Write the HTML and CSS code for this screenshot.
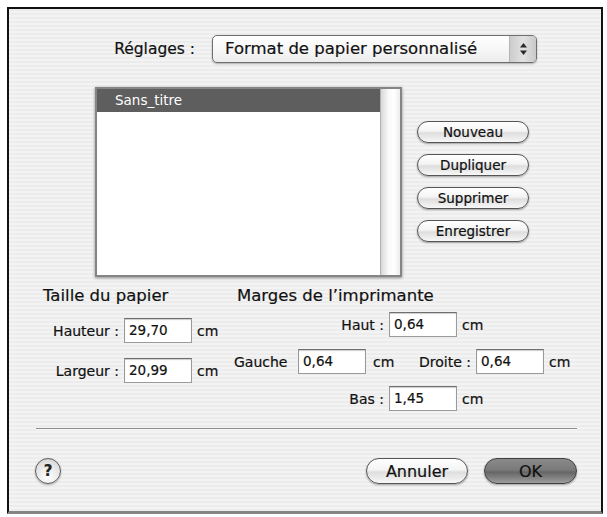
FILE: index.html
```html
<!DOCTYPE html>
<html lang="fr">

<head>
  <meta charset="utf-8">
  <title>Format de papier personnalisé</title>
  <link rel="stylesheet" href="styles.css">
</head>

<body>
  <div class="dialog">
    <div class="settings">
      <span class="settings-label">Réglages :</span>
      <div class="popup">
        <span class="popup-text">Format de papier personnalisé</span>
        <span class="popup-arrows">
          <svg width="9" height="14" viewBox="0 0 9 14">
            <path d="M4.5 1 L8 5.5 L1 5.5 Z" fill="#2a2a2a"/>
            <path d="M4.5 13 L8 8.5 L1 8.5 Z" fill="#2a2a2a"/>
          </svg>
        </span>
      </div>
    </div>

    <div class="middle">
      <div class="list">
        <div class="list-body">
          <div class="list-row selected">Sans_titre</div>
        </div>
        <div class="scrollbar"></div>
      </div>
      <div class="side-buttons">
        <button class="aqua">Nouveau</button>
        <button class="aqua">Dupliquer</button>
        <button class="aqua">Supprimer</button>
        <button class="aqua">Enregistrer</button>
      </div>
    </div>

    <div class="sizes">
      <div class="paper">
        <h2 class="group-title paper-title">Taille du papier</h2>
        <div class="field-row paper-first">
          <span class="lbl paper-lbl">Hauteur :</span>
          <span class="field">29,70</span>
          <span class="unit">cm</span>
        </div>
        <div class="field-row paper-second">
          <span class="lbl paper-lbl">Largeur :</span>
          <span class="field">20,99</span>
          <span class="unit">cm</span>
        </div>
      </div>

      <div class="margins">
        <h2 class="group-title">Marges de l’imprimante</h2>
        <div class="field-row margin-top">
          <span class="lbl wide-lbl">Haut :</span>
          <span class="field">0,64</span>
          <span class="unit">cm</span>
        </div>
        <div class="field-row margin-mid">
          <span class="lbl left-lbl">Gauche</span>
          <span class="field">0,64</span>
          <span class="unit unit-box">cm</span>
          <span class="lbl droite-lbl">Droite :</span>
          <span class="field">0,64</span>
          <span class="unit">cm</span>
        </div>
        <div class="field-row margin-mid">
          <span class="lbl wide-lbl">Bas :</span>
          <span class="field">1,45</span>
          <span class="unit">cm</span>
        </div>
      </div>
    </div>

    <hr class="separator">

    <div class="footer">
      <button class="help">?</button>
      <div class="spacer"></div>
      <button class="aqua big">Annuler</button>
      <button class="aqua big default">OK</button>
    </div>
  </div>
</body>

</html>
```

FILE: styles.css
```css
html {
  background-color: #ffffff;
}

body {
  margin: 0;
  font-family: "DejaVu Sans", "Liberation Sans", sans-serif;
  color: #111111;
  -webkit-text-stroke: 0.2px;
}

.dialog {
  box-sizing: border-box;
  margin: 7px 0 0 7px;
  width: 596px;
  height: 507px;
  border: 2px solid #111111;
  border-bottom: 3px solid #858585;
  background: repeating-linear-gradient(to bottom, #ececec 0 2px, #f3f3f3 2px 4px);
}

/* Réglages row */

.settings {
  display: flex;
  align-items: center;
  margin-top: 26px;
}

.settings-label {
  box-sizing: border-box;
  width: 203px;
  padding-right: 17px;
  text-align: right;
  font-size: 15.5px;
}

.popup {
  box-sizing: border-box;
  display: flex;
  width: 325px;
  height: 28px;
  border: 1px solid #6e6e6e;
  border-radius: 5px;
  background: linear-gradient(#ffffff, #f7f7f7 50%, #ececec);
  box-shadow: 0 1px 2px rgba(0, 0, 0, 0.3);
  overflow: hidden;
}

.popup-text {
  flex: 1;
  padding-left: 12px;
  font-size: 16.5px;
  line-height: 26px;
}

.popup-arrows {
  display: flex;
  align-items: center;
  justify-content: center;
  width: 26px;
  border-left: 1px solid #b5b5b5;
  background: linear-gradient(to right, #cccccc, #e2e2e2 50%, #c9c9c9);
}

/* list and side buttons */

.middle {
  display: flex;
  margin-top: 24px;
  padding-left: 86px;
}

.list {
  box-sizing: border-box;
  display: flex;
  width: 307px;
  height: 190px;
  border: 2px solid #858585;
  background: #ffffff;
  box-shadow: 0 1px 3px rgba(0, 0, 0, 0.4);
}

.list-body {
  flex: 1;
}

.list-row {
  height: 23px;
  line-height: 23px;
  padding-left: 18px;
  font-size: 13.5px;
}

.selected {
  background: #5e5e5e;
  color: #ffffff;
  -webkit-text-stroke: 0;
}

.scrollbar {
  width: 19px;
  border-left: 1px solid #b0b0b0;
  background: linear-gradient(to right, #d8d8d8, #fafafa 40%, #ffffff 70%, #ececec);
}

.side-buttons {
  display: flex;
  flex-direction: column;
  gap: 11px;
  margin-left: 15px;
  padding-top: 34px;
}

.aqua {
  box-sizing: border-box;
  width: 112px;
  height: 22px;
  padding: 0;
  border: 1px solid #555555;
  border-radius: 11px;
  background: linear-gradient(#ffffff, #f4f4f4 45%, #dedede 55%, #f7f7f7);
  box-shadow: 0 1px 2px rgba(0, 0, 0, 0.35);
  font-family: inherit;
  font-size: 13.5px;
  color: #111111;
  -webkit-text-stroke: 0.2px;
}

/* paper size and margins */

.sizes {
  display: flex;
  margin-top: 9px;
}

.group-title {
  margin: 0;
  font-size: 16.5px;
  font-weight: normal;
  line-height: 20px;
}

.paper {
  width: 224px;
}

.paper-title {
  padding-left: 34px;
}

.field-row {
  display: flex;
  align-items: center;
  height: 25px;
  font-size: 14px;
}

.lbl {
  box-sizing: border-box;
  text-align: right;
  padding-right: 5px;
}

.paper-lbl {
  width: 115px;
}

.paper-first {
  margin-top: 12px;
}

.paper-second {
  margin-top: 15px;
}

.field {
  box-sizing: border-box;
  width: 68px;
  height: 25px;
  padding-left: 4px;
  border: 1px solid #9a9a9a;
  border-top-color: #6f6f6f;
  background: #ffffff;
  box-shadow: inset 0 1px 1px rgba(0, 0, 0, 0.2);
  font-size: 13.5px;
  line-height: 23px;
}

.unit {
  padding-left: 5px;
}

.margins .group-title {
  padding-left: 4px;
}

.margin-top {
  margin-top: 6px;
}

.margin-mid {
  margin-top: 12px;
}

.wide-lbl {
  width: 156px;
}

.left-lbl {
  width: 65px;
  text-align: left;
  padding-left: 1px;
}

.unit-box {
  box-sizing: border-box;
  width: 31px;
  padding-left: 7px;
}

.droite-lbl {
  width: 79px;
}

/* footer */

.separator {
  margin: 17px 24px 0 27px;
  border: 0;
  border-top: 1px solid #8c8c8c;
  border-bottom: 1px solid #fafafa;
}

.footer {
  display: flex;
  align-items: center;
  gap: 16px;
  margin-top: 28px;
  padding-left: 26px;
  padding-right: 24px;
}

.spacer {
  flex: 1;
}

.help {
  box-sizing: border-box;
  width: 26px;
  height: 26px;
  padding: 0;
  border: 1px solid #5a5a5a;
  border-radius: 50%;
  background: radial-gradient(circle at 50% 75%, #ffffff, #e4e4e4 60%, #cfcfcf);
  box-shadow: 0 1px 2px rgba(0, 0, 0, 0.3);
  font-family: inherit;
  font-size: 15px;
  font-weight: bold;
  color: #222222;
}

.big {
  height: 26px;
  border-radius: 13px;
  font-size: 16px;
}

.footer .aqua {
  width: 102px;
}

.footer .default {
  width: 93px;
  border-color: #3f3f3f;
  background: linear-gradient(#8a8a8a, #7a7a7a 45%, #666666 55%, #9c9c9c);
  color: #111111;
}
```
